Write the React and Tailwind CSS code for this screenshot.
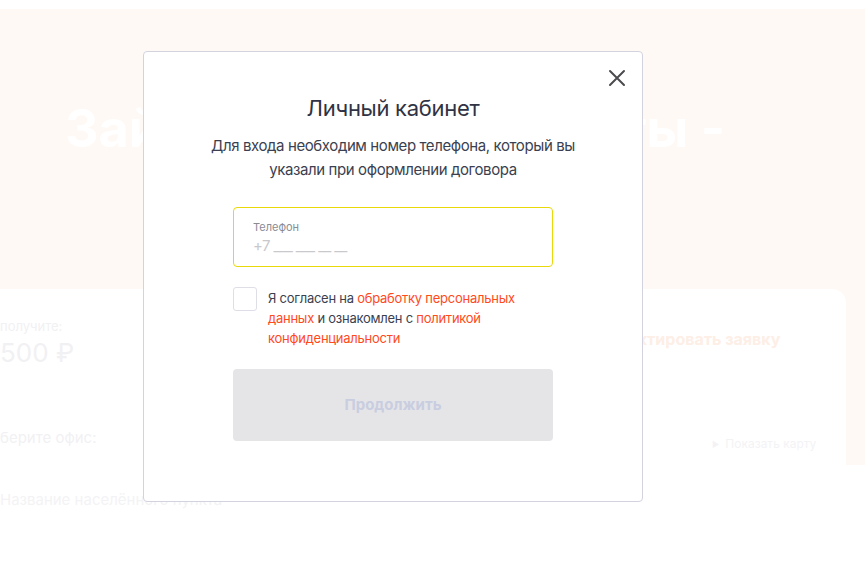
import React from 'react';

const font = { fontFamily: 'Inter, "Noto Sans", sans-serif' };

const CloseIcon = () => (
  <svg width="18" height="18" viewBox="0 0 18 18" fill="none">
    <path d="M2 2L16 16M16 2L2 16" stroke="#4b4b4f" strokeWidth="2" strokeLinecap="round" />
  </svg>
);

const LoginModal = () => (
  <div className="absolute left-[143px] top-[51px] w-[500px] h-[451px] bg-white border border-[#d3d3e0] rounded-[4px] pt-[41px]">
    <button className="absolute right-[15px] top-[16px] w-[20px] h-[20px] flex items-center justify-center">
      <CloseIcon />
    </button>
    <h2 className="text-center text-[22px] leading-[30px] tracking-[-0.3px] text-[#2f3344]">Личный кабинет</h2>
    <p className="mt-[11px] text-center text-[15px] leading-[24px] tracking-[-0.4px] text-[#3b3f4f]">
      Для входа необходим номер телефона, который вы
      <br />
      указали при оформлении договора
    </p>
    <div className="w-[320px] mx-auto">
      <div className="mt-[25px] h-[60px] border border-[#ead90a] rounded-[4px] pl-[19px] pt-[12px]">
        <div className="text-[11px] leading-[14px] text-[#8a8c94]">Телефон</div>
        <div className="text-[15px] leading-[22px] tracking-[-0.6px] text-[#c9c9cd] mt-[1px]">+7 ___ ___ __ __</div>
      </div>
      <div className="mt-[20px] flex gap-[11px]">
        <div className="w-[24px] h-[24px] shrink-0 border border-[#dedee6] rounded-[3px]" />
        <p className="text-[13px] leading-[20px] tracking-[-0.25px] text-[#3b3f4f] mt-[1px]">
          Я согласен на <span className="text-[#ff4a1c]">обработку персональных данных</span> и ознакомлен с{' '}
          <span className="text-[#ff4a1c]">политикой конфиденциальности</span>
        </p>
      </div>
      <button className="mt-[21px] w-full h-[72px] rounded-[4px] bg-[#e5e5e8] text-[15px] font-bold text-[#c9cde0]">
        Продолжить
      </button>
    </div>
  </div>
);

export default function App() {
  return (
    <div className="relative w-[865px] h-[561px] overflow-hidden bg-white" style={font}>
      <div className="mt-[9px] bg-[#fff9f5]">
        <div className="h-[280px] pl-[65px] pt-[90px]">
          <div className="w-[660px] flex justify-between text-[52px] leading-[60px] font-bold text-white whitespace-nowrap">
            <span>Займы</span>
            <span>до зарплаты -</span>
          </div>
        </div>
        <div className="flex">
          <div className="w-[846px] h-[176px] bg-white rounded-tr-[14px] relative">
            <div className="pt-[28px] text-[13px] text-[#f1f1f3]">получите:</div>
            <div className="text-[26px] leading-[32px] text-[#f1f1f3]">500 ₽</div>
            <div className="mt-[58px] text-[15px] text-[#f1f1f3]">берите офис:</div>
            <div className="absolute left-[598px] top-[38px] text-[16px] font-bold text-[#fdeee6] whitespace-nowrap">
              Редактировать заявку
            </div>
            <div className="absolute left-[712px] top-[146px] flex items-center gap-[6px] text-[12px] text-[#f3f3f5]">
              <span className="text-[8px]">▶</span>
              Показать карту
            </div>
          </div>
          <div className="flex-1" />
        </div>
      </div>
      <div className="pt-[24px] text-[15px] text-[#f3f3f5]">Название населённого пункта</div>
      <LoginModal />
    </div>
  );
}
